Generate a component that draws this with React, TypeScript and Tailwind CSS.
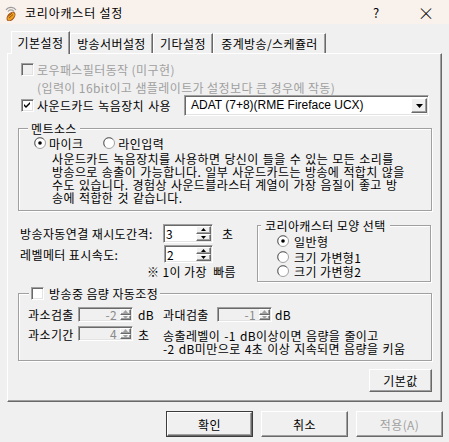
import React from "react";

const raised =
  "border border-t-white border-l-white border-r-[#696969] border-b-[#696969] shadow-[inset_-1px_-1px_0_#a0a0a0] bg-[#f0f0f0]";
const sunken =
  "border border-t-[#a0a0a0] border-l-[#a0a0a0] border-r-white border-b-white shadow-[inset_1px_1px_0_#696969,inset_-1px_-1px_0_#e3e3e3]";
const etched = "border border-[#a0a0a0] shadow-[inset_1px_1px_0_#fff,1px_1px_0_#fff]";

function Check({ checked = false, disabled = false }: { checked?: boolean; disabled?: boolean }) {
  return (
    <div className={`w-[13px] h-[13px] shrink-0 flex items-center justify-center ${sunken} ${disabled ? "bg-[#f0f0f0]" : "bg-white"}`}>
      {checked && (
        <svg width="7" height="7" viewBox="0 0 7 7">
          <path d="M0 2 L2 4 L6 0 L6 2 L2 6 L0 4 Z" fill="#000" />
        </svg>
      )}
    </div>
  );
}

function Radio({ on = false }: { on?: boolean }) {
  return (
    <svg width="12" height="12" viewBox="0 0 12 12" className="shrink-0">
      <circle cx="6" cy="6" r="5.5" fill="#fff" stroke="#a0a0a0" />
      <path d="M2.3 9.7 A5 5 0 0 1 9.7 2.3" fill="none" stroke="#696969" />
      {on && <circle cx="6" cy="6" r="1.8" fill="#000" />}
    </svg>
  );
}

function Arrow({ up, disabled }: { up: boolean; disabled?: boolean }) {
  return (
    <svg width="5" height="3" viewBox="0 0 5 3">
      <path d={up ? "M2.5 0 L5 3 L0 3 Z" : "M0 0 L5 0 L2.5 3 Z"} fill={disabled ? "#a0a0a0" : "#000"} />
    </svg>
  );
}

function Spin({
  value,
  size,
  disabled = false,
}: {
  value: string;
  size: string;
  disabled?: boolean;
}) {
  return (
    <div className={`flex shrink-0 ${size} ${sunken} ${disabled ? "bg-[#f0f0f0]" : "bg-white"}`}>
      <div
        className={`flex-1 flex items-center px-[2px] ${
          disabled ? "justify-end text-[#8a8a8a]" : "justify-start text-black"
        }`}
      >
        {value}
      </div>
      <div className={`flex flex-col p-[1px] ${disabled ? "w-[13px]" : "w-[17px]"}`}>
        <div className={`flex-1 flex items-center justify-center ${raised}`}>
          <Arrow up disabled={disabled} />
        </div>
        <div className={`flex-1 flex items-center justify-center ${raised}`}>
          <Arrow up={false} disabled={disabled} />
        </div>
      </div>
    </div>
  );
}

function AppIcon() {
  return (
    <svg width="14" height="16" viewBox="0 0 14 16">
      <path d="M2 5 A6 6 0 0 1 12 5" fill="none" stroke="#9a9a9a" strokeWidth="1.2" />
      <path d="M4 6.5 A3.5 3.5 0 0 1 10 6.5" fill="none" stroke="#9a9a9a" strokeWidth="1.2" />
      <ellipse cx="7" cy="11.5" rx="3" ry="5" transform="rotate(40 7 11.5)" fill="#f0a020" stroke="#a0521a" strokeWidth="1" />
      <path d="M5 13 L9 9.5 M4.5 11 L8 8" stroke="#7a3a10" strokeWidth="0.8" />
    </svg>
  );
}

export default function App() {
  const tabs = [
    { label: "기본설정", w: "w-[59px]", active: true },
    { label: "방송서버설정", w: "w-[83px]", active: false },
    { label: "기타설정", w: "w-[60px]", active: false },
    { label: "중계방송/스케쥴러", w: "w-[113px]", active: false },
  ];

  return (
    <div className="w-[449px] h-[442px] bg-[#f0f0f0] text-[12px] leading-[13px] tracking-[0.4px] text-black font-['Noto_Sans_CJK_KR',sans-serif] overflow-hidden">
      {/* title bar */}
      <div className="h-[24px] bg-[#f9f1ec] flex items-center">
        <div className="ml-[4px] mt-[1px]">
          <AppIcon />
        </div>
        <span className="ml-[7px] text-[12px] tracking-[0.8px]">코리아캐스터 설정</span>
        <span className="ml-auto text-[13px]">?</span>
        <span className="ml-[38px] mr-[14px] text-[17px] font-light leading-[17px]">×</span>
      </div>

      <div className="pt-[7px] px-[7px]">
        {/* tabs */}
        <div className="flex items-end h-[22px] pl-[4px]">
          {tabs.map((t) =>
            t.active ? (
              <div
                key={t.label}
                className={`${t.w} h-[23px] -mb-[1px] relative z-10 bg-[#f0f0f0] border-l border-t border-white border-r border-r-[#696969] shadow-[inset_-1px_0_0_#a0a0a0] flex items-center justify-center pb-[1px]`}
              >
                {t.label}
              </div>
            ) : (
              <div
                key={t.label}
                className={`${t.w} h-[20px] border-l border-t border-white border-r border-r-[#696969] shadow-[inset_-1px_0_0_#a0a0a0] flex items-center justify-center`}
              >
                {t.label}
              </div>
            )
          )}
        </div>

        {/* panel */}
        <div className="h-[349px] border-l border-t border-white border-r border-b border-r-[#696969] border-b-[#696969] shadow-[inset_-1px_-1px_0_#a0a0a0] pl-[10px] pr-[9px] flex flex-col">
          <div className="mt-[9px] h-[13px] flex items-center text-[#a0a0a0]">
            <div className="ml-[3px]">
              <Check disabled />
            </div>
            <span className="ml-[3px]">로우패스필터동작 (미구현)</span>
          </div>
          <div className="mt-[5px] pl-[19px] text-[#a0a0a0]">(입력이 16bit이고 샘플레이트가 설정보다 큰 경우에 작동)</div>

          <div className="mt-[1px] h-[21px] flex items-center">
            <div className="ml-[3px]">
              <Check checked />
            </div>
            <span className="ml-[3px] [word-spacing:1px]">사운드카드 녹음장치 사용</span>
            <div className={`ml-auto mr-[3px] w-[245px] h-[21px] bg-white flex items-center ${sunken}`}>
              <span className="pl-[6px] flex-1 font-['Liberation_Sans',Arial,sans-serif] text-[12px] tracking-normal">
                ADAT (7+8)(RME Fireface UCX)
              </span>
              <div className={`w-[16px] h-[15px] mr-[1px] flex items-center justify-center ${raised}`}>
                <svg width="7" height="4" viewBox="0 0 7 4">
                  <path d="M0 0 L7 0 L3.5 4 Z" fill="#000" />
                </svg>
              </div>
            </div>
          </div>

          {/* 멘트소스 */}
          <div className={`relative mt-[12px] h-[83px] ${etched}`}>
            <span className="absolute -top-[7px] left-[9px] px-[3px] bg-[#f0f0f0]">멘트소스</span>
            <div className="mt-[8px] h-[12px] flex items-center pl-[15px]">
              <Radio on />
              <span className="ml-[3px]">마이크</span>
              <div className="ml-[20px]">
                <Radio />
              </div>
              <span className="ml-[3px]">라인입력</span>
            </div>
            <p className="mt-[3px] pl-[33px] [word-spacing:1px]">
              사운드카드 녹음장치를 사용하면 당신이 들을 수 있는 모든 소리를
              <br />
              방송으로 송출이 가능합니다. 일부 사운드카드는 방송에 적합치 않을
              <br />
              수도 있습니다. 경험상 사운드블라스터 계열이 가장 음질이 좋고 방
              <br />
              송에 적합한 것 같습니다.
            </p>
          </div>

          {/* 재시도간격 + 모양 선택 */}
          <div className="mt-[13px] flex">
            <div className="w-[239px] flex flex-col">
              <div className="h-[19px] flex items-center">
                <span className="ml-[2px] w-[143px]">방송자동연결 재시도간격:</span>
                <Spin value="3" size="w-[50px] h-[19px]" />
                <span className="ml-[9px]">초</span>
              </div>
              <div className="mt-[2px] h-[18px] flex items-center">
                <span className="ml-[2px] w-[144px]">레벨메터 표시속도:</span>
                <Spin value="2" size="w-[49px] h-[18px]" />
              </div>
              <div className="mt-[2px] ml-[129px] whitespace-pre">※ 1이 가장  빠름</div>
            </div>
            <div className={`relative mt-[1px] w-[174px] h-[57px] ${etched}`}>
              <span className="absolute -top-[7px] left-[3px] px-[4px] bg-[#f0f0f0]">코리아캐스터 모양 선택</span>
              <div className="mt-[9px] h-[12px] flex items-center pl-[19px]">
                <Radio on />
                <span className="ml-[5px]">일반형</span>
              </div>
              <div className="mt-[4px] h-[12px] flex items-center pl-[19px]">
                <Radio />
                <span className="ml-[5px]">크기 가변형1</span>
              </div>
              <div className="mt-[2px] h-[12px] flex items-center pl-[19px]">
                <Radio />
                <span className="ml-[5px]">크기 가변형2</span>
              </div>
            </div>
          </div>

          {/* 음량 자동조정 */}
          <div className={`relative mt-[11px] h-[68px] ${etched}`}>
            <div className="absolute -top-[7px] left-[10px] px-[2px] bg-[#f0f0f0] flex items-center">
              <Check />
              <span className="ml-[5px]">방송중 음량 자동조정</span>
            </div>
            <div className="mt-[13px] h-[15px] flex items-center pl-[9px]">
              <span className="w-[50px]">과소검출</span>
              <Spin value="-2" size="w-[55px] h-[15px]" disabled />
              <span className="ml-[5px] w-[25px]">dB</span>
              <span className="w-[54px]">과대검출</span>
              <Spin value="-1" size="w-[55px] h-[15px]" disabled />
              <span className="ml-[3px]">dB</span>
            </div>
            <div className="mt-[4px] flex items-start pl-[9px]">
              <span className="w-[50px] mt-[2px]">과소기간</span>
              <Spin value="4" size="w-[55px] h-[15px]" disabled />
              <span className="ml-[5px] w-[25px] mt-[2px]">초</span>
              <div className="mt-[3px] [word-spacing:1px]">
                송출레벨이 -1 dB이상이면 음량을 줄이고
                <br />
                -2 dB미만으로 4초 이상 지속되면 음량을 키움
              </div>
            </div>
          </div>

          <button className={`self-end mt-[8px] w-[63px] h-[23px] flex items-center justify-center ${raised}`}>
            기본값
          </button>
        </div>

        {/* dialog buttons */}
        <div className="mt-[9px] flex justify-end gap-[8px] -mr-[1px]">
          <button className="w-[87px] h-[26px] border border-[#3c3c3c] bg-[#f0f0f0] flex">
            <div className={`flex-1 flex items-center justify-center ${raised}`}>확인</div>
          </button>
          <button className={`w-[87px] h-[26px] flex items-center justify-center ${raised}`}>취소</button>
          <button className={`w-[87px] h-[26px] flex items-center justify-center text-[#a0a0a0] ${raised}`}>
            적용(A)
          </button>
        </div>
      </div>
    </div>
  );
}
